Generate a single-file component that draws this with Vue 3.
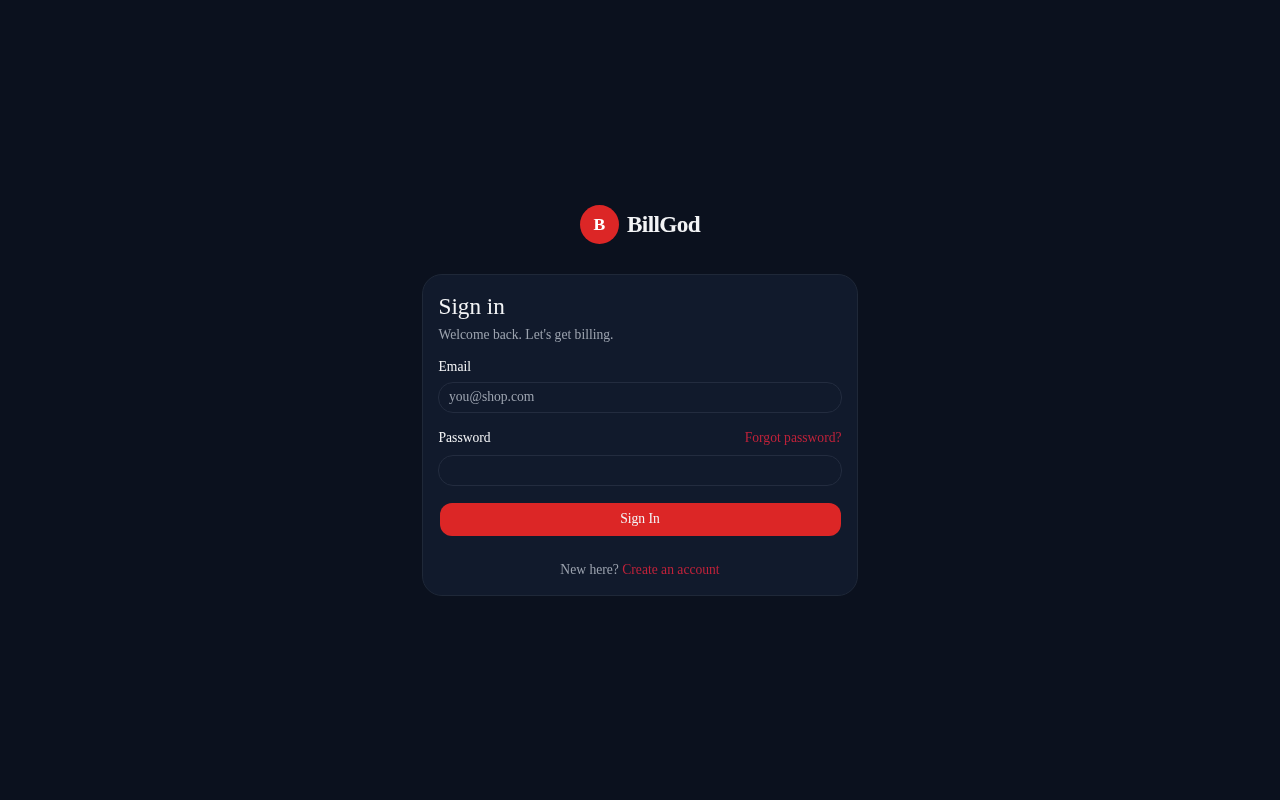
<template>
  <div class="page">
    <div class="wrap">
      <!-- logo -->
      <div class="brand">
        <div class="mark">B</div>
        <span class="brand-name">BillGod</span>
      </div>

      <form class="card" @submit.prevent>
        <h1 class="title">Sign in</h1>
        <p class="sub">Welcome back. Let's get billing.</p>

        <div class="field">
          <label class="label" for="email">Email</label>
          <input id="email" v-model="email" class="input" type="email" placeholder="you@shop.com" />
        </div>

        <div class="field field-password">
          <div class="label-row">
            <label class="label" for="password">Password</label>
            <a class="link" href="#">Forgot password?</a>
          </div>
          <input id="password" v-model="password" class="input" type="password" />
        </div>

        <button class="submit" type="submit">Sign In</button>

        <p class="foot">New here? <a class="link" href="#">Create an account</a></p>
      </form>
    </div>
  </div>
</template>

<script setup>
import { ref } from 'vue';

const email = ref('');
const password = ref('');
</script>

<style>
html,
body {
  margin: 0;
  background: #0b111e;
}
</style>

<style scoped>
.page {
  min-height: 800px;
  display: flex;
  align-items: center;
  justify-content: center;
  background: #0b111e;
  font-family: "Liberation Serif", "Times New Roman", serif;
  color: #f3f4f6;
}

.wrap {
  width: 436px;
  will-change: transform;
}

.brand {
  display: flex;
  align-items: center;
  justify-content: center;
  gap: 8px;
  margin-bottom: 30px;
}

.mark {
  width: 39px;
  height: 39px;
  border-radius: 50%;
  background: #dc2626;
  color: #fff;
  font-size: 17.6px;
  font-weight: 700;
  display: flex;
  align-items: center;
  justify-content: center;
}

.brand-name {
  font-size: 23.2px;
  font-weight: 700;
  letter-spacing: -0.6px;
}

.card {
  box-sizing: border-box;
  height: 322px;
  padding: 15px 15px 16px;
  background: #111a2c;
  border: 1px solid #1f2838;
  border-radius: 20px;
}

.title {
  margin: 0 0 0 0.5px;
  font-size: 23.2px;
  font-weight: 400;
  line-height: 32px;
}

.sub {
  margin: 3px 0 0 0.5px;
  font-size: 13.6px;
  line-height: 20px;
  color: #9ca3af;
}

.field {
  margin-top: 12px;
}

.field-password {
  margin-top: 15px;
}

.label {
  display: block;
  margin-left: 0.5px;
  font-size: 13.6px;
  line-height: 20px;
}

.label-row {
  display: flex;
  justify-content: space-between;
  align-items: center;
  padding-right: 0.5px;
}

.input {
  display: block;
  box-sizing: border-box;
  width: 100%;
  height: 31px;
  margin-top: 5px;
  padding: 0 10px 2px;
  background: #111a2c;
  border: 1px solid #232c3f;
  border-radius: 15px;
  outline: none;
  font-family: inherit;
  font-size: 13.6px;
  color: #f3f4f6;
}

.field-password .input {
  margin-top: 7px;
}

.input::placeholder {
  color: #9ca3af;
  opacity: 1;
}

.link {
  color: #c0223a;
  font-size: 13.6px;
  text-decoration: none;
}

.submit {
  display: block;
  width: 401px;
  height: 33px;
  margin: 17px auto 0;
  padding: 0 0 1px;
  border: none;
  border-radius: 12px;
  background: #dc2626;
  color: #f3f4f6;
  font-family: inherit;
  font-size: 13.6px;
}

.foot {
  margin: 23px 0 0;
  font-size: 13.6px;
  line-height: 21px;
  text-align: center;
  color: #9ca3af;
}
</style>
